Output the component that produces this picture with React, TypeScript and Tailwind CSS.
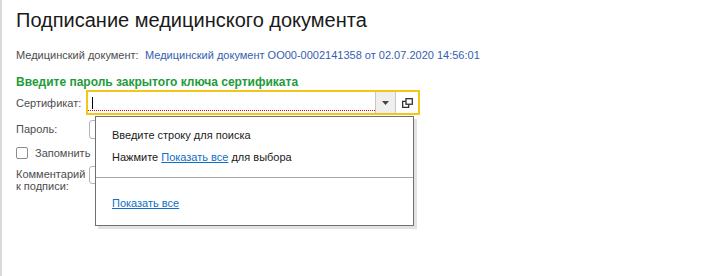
import React from "react";

const font = { fontFamily: '"Liberation Sans", Arial, sans-serif' };

export default function App() {
  return (
    <div
      className="relative w-[702px] h-[276px] bg-white border-l-2 border-[#d9d9d9] overflow-hidden"
      style={font}
    >
      <div className="pl-[14px] pt-2 flex flex-col whitespace-nowrap">
        <div className="text-[20px] leading-[24px] text-[#1a1a1a]">
          Подписание медицинского документа
        </div>
        <div className="mt-[15px] flex text-[11px] leading-[16px]">
          <span className="w-[129px] text-[#4d4d4d]">Медицинский документ:</span>
          <span className="text-[#3560b0]">
            Медицинский документ ОО00-0002141358 от 02.07.2020 14:56:01
          </span>
        </div>
        <div className="mt-[11px] text-[12px] leading-[16px] font-bold text-[#1e9b3c]">
          Введите пароль закрытого ключа сертификата
        </div>
        {/* Сертификат */}
        <div className="flex items-center h-[25px] text-[11px] leading-[16px]">
          <span className="w-[70px] text-[#4d4d4d]">Сертификат:</span>
          <div className="flex h-[25px] w-[334px] border-2 border-[#f5c518] bg-white">
            <div className="relative flex-1 flex items-center pl-[4px]">
              <div className="w-px h-[12px] bg-black" />
              <div className="absolute left-0 right-0 bottom-[2px] border-b border-dotted border-[#d01010]" />
            </div>
            <div className="w-[21px] h-full bg-[#efefef] border-x border-[#c6c6c6] flex items-center justify-center">
              <svg width="7" height="4" viewBox="0 0 7 4">
                <path d="M0 0 H7 L3.5 4 Z" fill="#444" />
              </svg>
            </div>
            <div className="w-[22px] flex items-center justify-center">
              <svg width="11" height="10" viewBox="0 0 11 10" fill="none" stroke="#333" strokeWidth="1.3">
                <rect x="4" y="0.65" width="6.3" height="5.6" />
                <path d="M4 3.3 H0.65 V9.35 H6.7 V6.3" />
              </svg>
            </div>
          </div>
        </div>
        {/* Пароль */}
        <div className="mt-[4px] flex items-center h-[20px] text-[11px] leading-[16px]">
          <span className="w-[73px] text-[#4d4d4d]">Пароль:</span>
          <div className="h-[19px] w-[240px] border border-[#b4b4b4] rounded-[3px]" />
        </div>
        {/* Запомнить */}
        <div className="mt-[4px] flex items-center h-[20px] text-[11px] leading-[16px]">
          <div className="w-[12px] h-[12px] border border-[#8c8c8c] rounded-[2px] bg-white" />
          <span className="ml-[7px] text-[#4d4d4d]">Запомнить</span>
        </div>
        {/* Комментарий */}
        <div className="mt-[3px] flex items-start text-[11px] leading-[12px]">
          <span className="w-[73px] text-[#4d4d4d] pt-[2px]">
            Комментарий
            <br />к подписи:
          </span>
          <div className="h-[18px] w-[328px] border border-[#b4b4b4] rounded-[3px]" />
        </div>
      </div>

      {/* Dropdown popup */}
      <div className="absolute left-[93px] top-[116px] w-[319px] h-[110px] bg-white border border-[#707070] shadow-[3px_3px_0_0_#e2e2e2] flex flex-col text-[11px] leading-[16px] text-[#1a1a1a]">
        <div className="h-[61px] border-b border-[#a8a8a8] pl-[16px] pt-[10px] flex flex-col gap-[6px]">
          <span>Введите строку для поиска</span>
          <span>
            Нажмите{" "}
            <span className="text-[#0f6fc6] underline">Показать все</span> для выбора
          </span>
        </div>
        <div className="pl-[16px] pt-[17px]">
          <span className="text-[#0f6fc6] underline">Показать все</span>
        </div>
      </div>
    </div>
  );
}
